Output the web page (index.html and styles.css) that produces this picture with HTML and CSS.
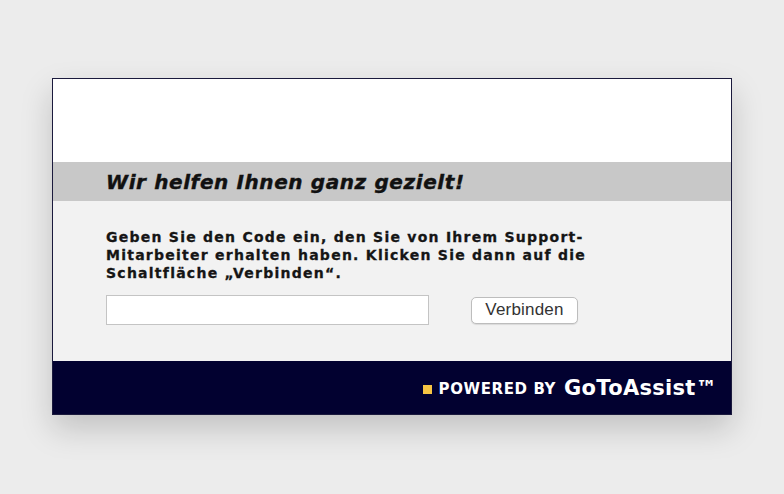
FILE: index.html
```html
<!DOCTYPE html>
<html lang="de">
<head>
    <meta charset="UTF-8">
    <title>GoToAssist</title>
    <link rel="stylesheet" href="styles.css">
</head>
<body>
    <div class="window">
        <div class="top-area"></div>

        <div class="title-band">
            <h1>Wir helfen Ihnen ganz gezielt!</h1>
        </div>

        <div class="content">
            <p class="intro">Geben Sie den Code ein, den Sie von Ihrem Support-<br>Mitarbeiter erhalten haben. Klicken Sie dann auf die<br>Schaltfläche „Verbinden“.</p>
            <form class="code-form">
                <input type="text" class="code-input">
                <button type="button" class="connect-btn">Verbinden</button>
            </form>
        </div>

        <div class="footer">
            <span class="bullet"></span>
            <span class="powered">Powered by</span>
            <span class="brand">GoToAssist&trade;</span>
        </div>
    </div>
</body>
</html>
```

FILE: styles.css
```css
body {
    margin: 0;
    background: #ececec;
    font-family: "DejaVu Sans", Verdana, sans-serif;
    height: 494px;
    overflow: hidden;
}

/* Fenster */
.window {
    width: 678px;
    margin: 78px 0 0 52px;
    border: 1px solid #1b1a3d;
    box-shadow: 0 14px 30px rgba(0, 0, 0, 0.18);
    background: #fff;
}

.top-area {
    height: 83px;
    background: #fff;
}

/* Titel */
.title-band {
    height: 39px;
    background: #c8c8c8;
    display: flex;
    align-items: center;
    padding-left: 53px;
}

.title-band h1 {
    margin: 0;
    font-size: 20px;
    font-weight: bold;
    font-style: italic;
    letter-spacing: 0.6px;
    color: #111;
    -webkit-text-stroke: 0.4px #111;
}

/* Inhalt */
.content {
    background: #f2f2f2;
    padding: 27px 0 0 53px;
    height: 160px;
    box-sizing: border-box;
}

.intro {
    margin: 0 0 13px;
    font-size: 14px;
    font-weight: bold;
    line-height: 18px;
    letter-spacing: 1.25px;
    color: #151515;
    -webkit-text-stroke: 0.3px #151515;
}

.code-form {
    display: flex;
    align-items: center;
    gap: 42px;
}

.code-input {
    width: 323px;
    height: 30px;
    margin: 0;
    border: 1px solid #c4c4c4;
    background: #fff;
    padding: 0 2px;
    box-sizing: border-box;
}

.connect-btn {
    width: 107px;
    height: 27px;
    padding: 0;
    border: 1px solid #bdbdbd;
    border-radius: 5px;
    background: #fff;
    font-family: "Liberation Sans", Arial, sans-serif;
    font-size: 17px;
    letter-spacing: 0.2px;
    color: #333;
    box-shadow: 0 1px 1px rgba(0, 0, 0, 0.1);
}

/* Footer */
.footer {
    height: 53px;
    background: #020130;
    display: flex;
    align-items: center;
    justify-content: flex-end;
    padding-right: 14px;
    color: #fff;
}

.bullet {
    width: 9px;
    height: 9px;
    background: #f6c443;
    margin: 4px 7px 0 0;
}

.powered {
    font-size: 15px;
    font-weight: bold;
    text-transform: uppercase;
    letter-spacing: 0.6px;
    margin: 3px 8px 0 0;
}

.brand {
    font-size: 21px;
    font-weight: bold;
    letter-spacing: 0.3px;
}
```
